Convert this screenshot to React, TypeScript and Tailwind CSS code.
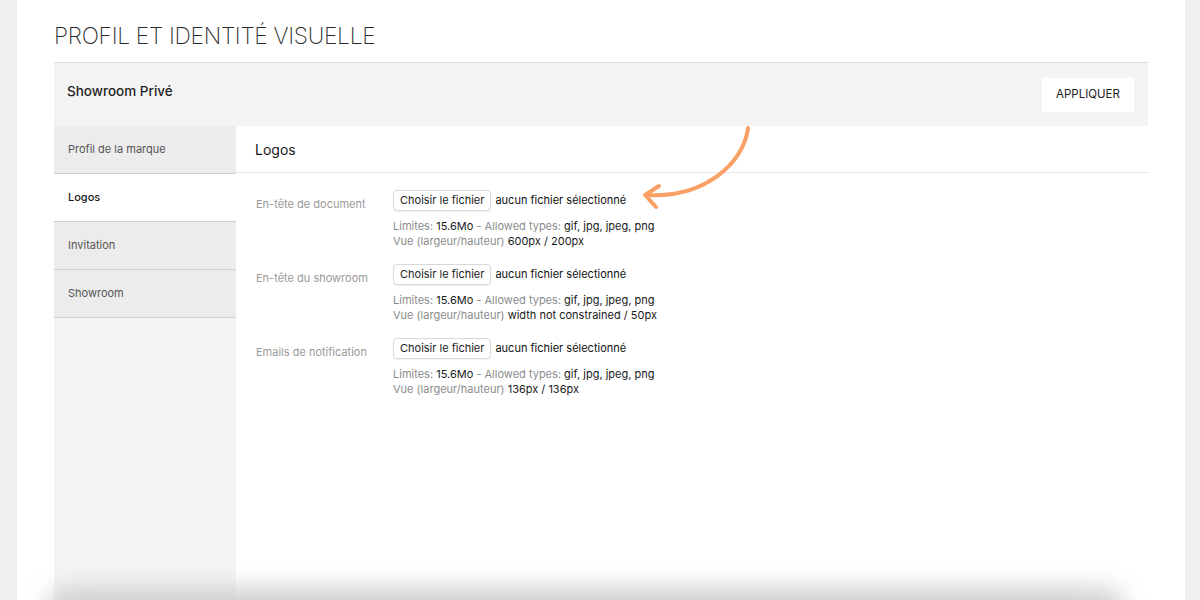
import React from "react";

interface LogoField {
  label: string;
  size: string;
}

const FIELDS: LogoField[] = [
  { label: "En-tête de document", size: "600px / 200px" },
  { label: "En-tête du showroom", size: "width not constrained / 50px" },
  { label: "Emails de notification", size: "136px / 136px" },
];

const MENU = ["Profil de la marque", "Logos", "Invitation", "Showroom"];

const FileRow = ({ field }: { field: LogoField }) => (
  <div className="flex">
    <div className="w-[137px] pt-[7px] text-[11px] leading-[15px] text-[#9a9a9a]">
      {field.label}
    </div>
    <div className="flex flex-col">
      <div className="flex items-center gap-[4px]">
        <button className="h-[21px] px-[6px] rounded-[4px] border border-[#d9d9d9] bg-white text-[11px] text-[#222] shadow-[0_1px_1px_rgba(0,0,0,0.06)]">
          Choisir le fichier
        </button>
        <span className="text-[11px] text-[#111]">aucun fichier sélectionné</span>
      </div>
      <div className="mt-[8px] text-[11px] leading-[15px] text-[#8c8c8c]">
        Limites: <span className="text-[#1a1a1a]">15.6Mo</span> - Allowed types:{" "}
        <span className="text-[#1a1a1a]">gif, jpg, jpeg, png</span>
      </div>
      <div className="text-[11px] leading-[15px] text-[#8c8c8c]">
        Vue (largeur/hauteur) <span className="text-[#1a1a1a]">{field.size}</span>
      </div>
    </div>
  </div>
);

const App = () => {
  return (
    <div
      className="h-[600px] overflow-hidden bg-[#efefef] pl-[17px] pr-[15px]"
      style={{ fontFamily: "Inter, 'Liberation Sans', sans-serif" }}
    >
      <div className="relative flex h-full flex-col bg-white px-[37px]">
        {/* Title */}
        <div className="flex h-[62px] items-end pb-[12px]">
          <h1 className="text-[22.8px] font-extralight leading-[28px] tracking-[-0.3px] text-[#2a2a2a]">
            PROFIL ET IDENTITÉ VISUELLE
          </h1>
        </div>

        {/* Header bar */}
        <div className="flex h-[64px] items-center justify-between border-t border-[#dedede] bg-[#f4f4f4] pl-[13px] pr-[14px]">
          <span className="-mt-[6px] text-[13.5px] font-medium text-[#1e1e1e]">Showroom Privé</span>
          <button className="h-[34px] w-[92px] bg-white text-[11.5px] text-[#222]">
            APPLIQUER
          </button>
        </div>

        {/* Body */}
        <div className="flex flex-1">
          <div className="flex w-[182px] flex-col bg-[#f4f4f4]">
            {MENU.map((item) => (
              <div
                key={item}
                className={
                  item === "Logos"
                    ? "flex h-[48px] items-center border-b border-[#d0d0d0] bg-white pl-[14px] text-[11px] font-medium text-[#1a1a1a]"
                    : "flex h-[48px] items-center border-b border-[#d0d0d0] bg-[#ececec] pl-[14px] text-[11px] text-[#555]"
                }
              >
                {item}
              </div>
            ))}
          </div>

          <div className="flex flex-1 flex-col">
            <div className="flex h-[47px] items-center border-b border-[#e6e6e6] pl-[19px] text-[14px] text-[#1a1a1a]">
              Logos
            </div>
            <div className="flex flex-col gap-[15px] pl-[20px] pt-[17px]">
              {FIELDS.map((f) => (
                <FileRow key={f.label} field={f} />
              ))}
            </div>
          </div>
        </div>

        {/* Annotation arrow */}
        <svg
          className="absolute left-[613px] top-[120px]"
          width="140"
          height="100"
          viewBox="630 120 140 100"
          fill="none"
        >
          <path
            d="M748 128 C744 162 706 198 648 195"
            stroke="#f9a067"
            strokeWidth="4"
            strokeLinecap="round"
          />
          <path
            d="M659 186 L645 195 L656 207"
            stroke="#f9a067"
            strokeWidth="4"
            strokeLinecap="round"
            strokeLinejoin="round"
          />
        </svg>

        {/* Shadow of overlapping card below */}
        <div className="absolute left-[28px] right-[60px] top-[588px] h-[50px] rounded-[30px] bg-[#cfcfcf] blur-[12px]" />
      </div>
    </div>
  );
};

export default App;
